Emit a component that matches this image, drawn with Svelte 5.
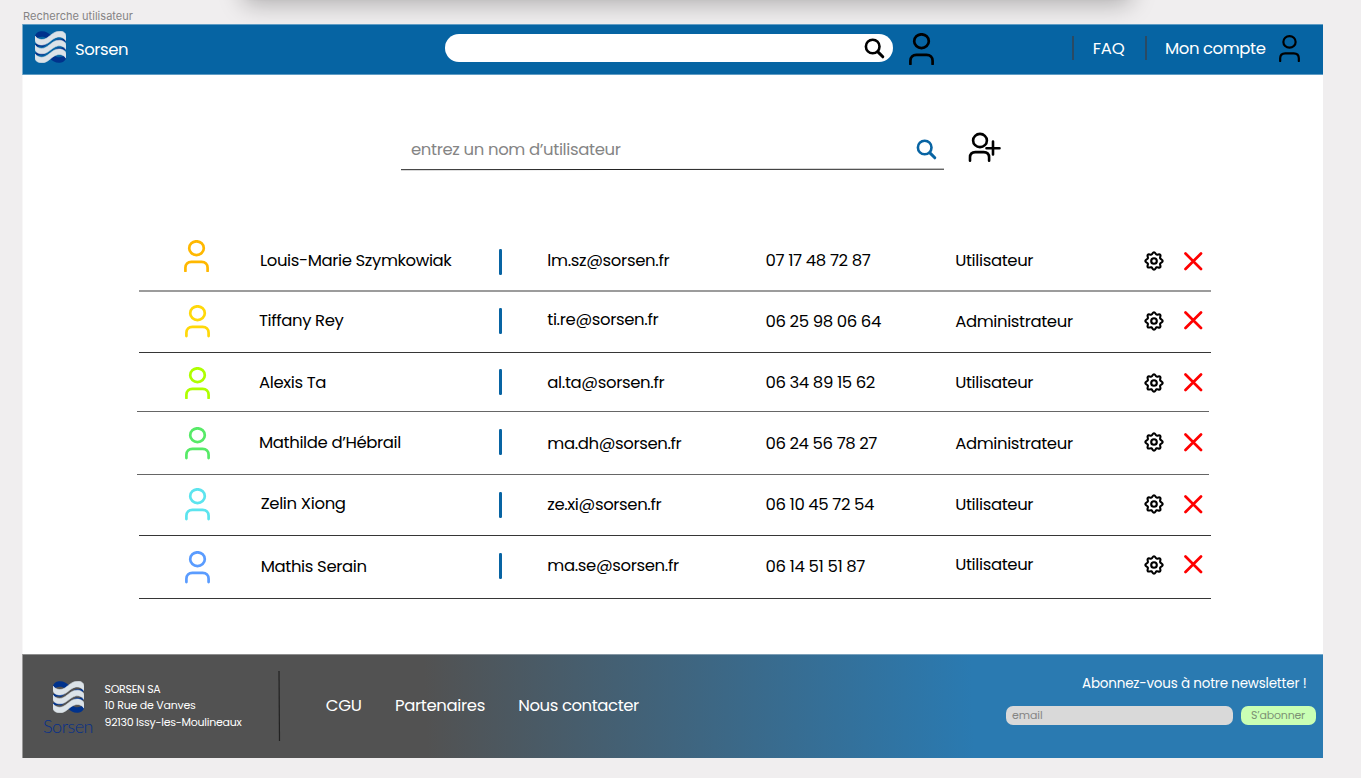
<script>
  const users = [
    { name: 'Louis-Marie Szymkowiak', mail: 'lm.sz@sorsen.fr', tel: '07 17 48 72 87', role: 'Utilisateur', color: '#ffb800', h: 62, w: [191.5, 122, 105, 78], y: [19, 19, 19, 19], dx: [0, 1], icon: 9.5, bar: 18.5, gear: 20.5, del: 21.5, line: '#9c9c9c', thick: 2, shift: 0 },
    { name: 'Tiffany Rey', mail: 'ti.re@sorsen.fr', tel: '06 25 98 06 64', role: 'Administrateur', color: '#ffd809', h: 61, w: [84.5, 111, 115.5, 117.5], y: [17, 16.4, 18, 18], dx: [0.6, 0], icon: 13, bar: 15.5, gear: 19, del: 18.5, line: '#363636', thick: 1, shift: 0 },
    { name: 'Alexis Ta', mail: 'al.ta@sorsen.fr', tel: '06 34 89 15 62', role: 'Utilisateur', color: '#aeff00', h: 59, w: [67, 117, 109.5, 78], y: [18, 18, 18, 18], dx: [0.6, 0], icon: 13.5, bar: 16, gear: 19.5, del: 20, line: '#666', thick: 1, shift: -2 },
    { name: 'Mathilde d’Hébrail', mail: 'ma.dh@sorsen.fr', tel: '06 24 56 78 27', role: 'Administrateur', color: '#57ea67', h: 63, w: [142, 134, 111.5, 117.5], y: [19, 20, 20, 20], dx: [0.6, 0], icon: 15, bar: 17, gear: 20, del: 20.5, line: '#666', thick: 1, shift: -2 },
    { name: 'Zelin Xiong', mail: 'ze.xi@sorsen.fr', tel: '06 10 45 72 54', role: 'Utilisateur', color: '#5ce4ee', h: 61, w: [85, 114, 108.5, 78], y: [17, 18, 18, 18], dx: [0.6, 1.7], icon: 13, bar: 16.5, gear: 19, del: 19.5, line: '#363636', thick: 1, shift: 0 },
    { name: 'Mathis Serain', mail: 'ma.se@sorsen.fr', tel: '06 14 51 51 87', role: 'Utilisateur', color: '#5a9cff', h: 63, w: [106, 131.5, 99.5, 78], y: [19, 18, 19, 17], dx: [0.6, 1.7], icon: 15, bar: 17, gear: 18.5, del: 19, line: '#363636', thick: 1, shift: 0 }
  ];

  // Spreads the letters of a label so that it fills the given width.
  function fit(node, width) {
    const natural = node.getBoundingClientRect().width;
    node.style.letterSpacing = (width - natural) / node.textContent.length + 'px';
  }
</script>

{#snippet person(color, w, h, sw)}
  <svg width={w} height={h} viewBox="0 0 25 32.5" fill="none" stroke={color} stroke-width={sw} stroke-linecap="round">
    <ellipse cx="12.5" cy="8.2" rx="7.3" ry="6.9" />
    <path d="M1.4 31.1v-3.4c0-3.6 2.4-5.9 6-5.9h10.2c3.600 0 6 2.300 6 5.900v3.400" />
  </svg>
{/snippet}

{#snippet glass(color)}
  <svg width="21" height="21" viewBox="0 0 21 21" fill="none" stroke={color} stroke-linecap="round">
    <circle cx="8.700" cy="8.500" r="6.800" stroke-width="2.600" />
    <path d="M13.900 13.900l4.900 4.900" stroke-width="3" />
  </svg>
{/snippet}

{#snippet logo()}
  <svg width="31" height="32" viewBox="0 0 31 32">
    <g fill="#00328c">
      <path d="M0 5C1 1.500 4 .3 7 .3c4 0 6.500 2 9 4l-4 3C9 5.500 4 4.500 0 9z" />
      <path d="M31 27c-1 3.500-4 4.700-7 4.700-4 0-6.500-2-9-4l4-3c3 1.800 8 2.800 12-1.700z" />
      <path d="M0 14c4-4 8-3.500 12-1l-4 3C5 14.500 2 15 0 18z" />
      <path d="M0 22.500c4-4 8-3.500 12-1l-4 3C5 23 2 24 0 26z" />
      <path d="M31 9.500c-3 3.500-7 4-12 1.500l4-3c3 1 6 .5 8-2z" />
      <path d="M31 18c-3 3.500-7 4-12 1.500l4-3c3 1 6 .5 8-2z" />
    </g>
    <g fill="#dce3e8" stroke="#dce3e8" stroke-width=".6">
      <path d="M0 5c2.500 3.500 7 4.500 11 2.500C15.500 5 18.500.2 25 .2c3.500 0 6 2 6 5v4.600c-3-4.300-7.500-5-12-2.300-4 2.500-7 6.500-12 6.500-4 0-7-2-7-5z" />
      <path d="M0 14c2.500 3.500 7 4.500 11 2.200 4.500-2.500 7.500-7 13-7 3.500 0 7 1.800 7 5v4.300c-3-4.300-7.500-4.700-12-2-4 2.500-7 6.300-12 6.300-4 0-7-2-7-4.800z" />
      <path d="M0 22.800c2.500 3.500 7 4.500 11 2.200 4.500-2.500 7.500-7 13-7 3.500 0 7 1.800 7 5v4.200c-3-4.300-7.500-4.700-12-2-4 2.500-7 6.600-12 6.600-4 0-7-2-7-4.800z" />
    </g>
  </svg>
{/snippet}

<div class="canvas">
  <div class="toolbar"></div>
  <div class="caption"><span use:fit={110}>Recherche utilisateur</span></div>

  <div class="frame">
    <header>
      <div class="brand">{@render logo()}<span use:fit={53}>Sorsen</span></div>
      <div class="pill">{@render glass('#000')}</div>
      <div class="head-user">{@render person('#000', 25, 32.5, 2.700)}</div>
      <nav>
        <i></i>
        <span class="faq" use:fit={32}>FAQ</span>
        <i></i>
        <span class="account" use:fit={100.5}>Mon compte</span>
        {@render person('#000', 21, 27.3, 2.600)}
      </nav>
    </header>

    <main>
      <div class="search">
        <div class="field">
          <div class="entry">
            <span use:fit={209.5}>entrez un nom d’utilisateur</span>
            {@render glass('#0864a3')}
          </div>
          <svg class="rule" width="543" height="3" viewBox="0 0 543 3"><path d="M0 1.700L543 1.200" stroke="#222" stroke-width="1" /></svg>
        </div>
        <svg width="33" height="31" viewBox="0 0 33 31" fill="none" stroke="#000" stroke-width="2.600" stroke-linecap="round">
          <ellipse cx="12" cy="8.500" rx="6.900" ry="6.600" />
          <path d="M2 28.800v-3.300c0-3.400 2.200-5.400 5.400-5.400h8.300c3.200 0 5.400 2 5.400 5.400v3.300" />
          <path d="M25 9.500v13M18.500 16.300h13" stroke-width="2.600" />
        </svg>
      </div>

      <div class="list">
        {#each users as u}
          <div class="row" style:height="{u.h}px">
            <div class="cells">
              <div style:padding-top="{u.icon}px" style:padding-left="{u.dx[0]}px">{@render person(u.color, 25, 32.5, 2.700)}</div>
              <div style:padding-top="{u.y[0]}px" style:padding-left="{u.dx[1] + 0.7}px"><span use:fit={u.w[0]}>{u.name}</span></div>
              <div style:padding-top="{u.bar}px">
                <svg width="3" height="26"><rect width="3" height="26" rx="1.200" fill="#0864a3" /></svg>
              </div>
              <div style:padding-top="{u.y[1]}px"><span use:fit={u.w[1]}>{u.mail}</span></div>
              <div style:padding-top="{u.y[2]}px"><span use:fit={u.w[2]}>{u.tel}</span></div>
              <div style:padding-top="{u.y[3]}px"><span use:fit={u.w[3]}>{u.role}</span></div>
              <div style:padding-top="{u.gear}px">
                <svg width="20" height="20" viewBox="0 0 20 20" fill="none" stroke="#000" stroke-width="2.100" stroke-linejoin="round">
                  <path d="M10 1.300c1.400 0 1.500 1.900 2.600 2.350s2.600-.9 3.600.1-.5 2.400-.05 3.500 2.550 1.350 2.550 2.750-2.100 1.600-2.550 2.700 1 2.600 0 3.600-2.450-.5-3.550-.05-1.200 2.450-2.600 2.450-1.500-2-2.600-2.450-2.600 1-3.600 0 .5-2.500.05-3.600S1.300 11.400 1.300 10s2.100-1.600 2.550-2.700-1-2.600 0-3.600 2.450.4 3.550-.05S8.600 1.300 10 1.300z" />
                  <circle cx="10" cy="10" r="2.800" />
                </svg>
              </div>
              <div style:padding-top="{u.del}px">
                <svg width="19" height="19" viewBox="0 0 19 19" stroke="#f00" stroke-width="2.700" stroke-linecap="round"><path d="M1.500 1.500l15.500 15.500M17 1.500L1.500 17" /></svg>
              </div>
            </div>
            <div class="line" style:height="{u.thick}px" style:background={u.line} style:margin-left="{u.shift}px"></div>
          </div>
        {/each}
      </div>
    </main>

    <footer>
      <div class="foot-logo">{@render logo()}<span use:fit={50}>Sorsen</span></div>
      <div class="address">
        <div><span use:fit={56}>SORSEN SA</span></div>
        <div><span use:fit={91}>10 Rue de Vanves</span></div>
        <div><span use:fit={137}>92130 Issy-les-Moulineaux</span></div>
      </div>
      <svg class="split" width="3" height="70"><path d="M1 0L1.500 70" stroke="#222" stroke-width="1.200" /></svg>
      <div class="links">
        <span use:fit={36}>CGU</span>
        <span use:fit={90}>Partenaires</span>
        <span use:fit={120.5}>Nous contacter</span>
      </div>
      <div class="news">
        <div class="title"><span use:fit={224.5}>Abonnez-vous à notre newsletter !</span></div>
        <div class="form">
          <div class="email"><span use:fit={30.5}>email</span></div>
          <div class="go"><span use:fit={54}>S’abonner</span></div>
        </div>
      </div>
    </footer>
  </div>
</div>

<style>
  :global(body) { background: #f0eeef; }
  .canvas {
    position: relative;
    box-sizing: border-box;
    width: 1361px;
    height: 778px;
    padding-left: 23px;
    overflow: hidden;
    font: 16.500px/24px Poppins, Inter, sans-serif;
    color: #000;
    white-space: nowrap;
  }
  svg { display: block; flex: none; }
  span { display: inline-block; }
  .toolbar {
    position: absolute;
    left: 243px;
    top: -41px;
    width: 888px;
    height: 40px;
    border-radius: 6px;
    box-shadow: 0 0 2px rgba(0, 0, 0, .15), 0 5px 24px rgba(0, 0, 0, .28);
  }
  .caption {
    height: 24px;
    box-sizing: border-box;
    padding-top: 8px;
    font: 11px/16px Inter, sans-serif;
    color: #858384;
  }
  .frame { position: relative; width: 1300px; height: 734px; background: #fff; box-shadow: -1px 0 #f8f7f7; }
  header {
    box-sizing: border-box;
    height: 51px;
    border-top: 1px solid #5f9cc4;
    border-bottom: 1px solid #5f9cc4;
    background: #0664a3;
    box-shadow: -1px 0 #7baccb;
    color: #fff;
    display: flex;
    align-items: flex-start;
  }
  .brand { display: flex; width: 410px; padding: 6px 0 0 12px; gap: 9px; box-sizing: content-box; }
  .brand span { margin-top: 7px; }
  .pill {
    box-sizing: border-box;
    width: 448px;
    height: 28px;
    margin: 9.400px 0 0 0;
    border-radius: 14px;
    background: #fff;
    display: flex;
    justify-content: flex-end;
    padding: 4px 8.500px 0 0;
  }
  .head-user { padding: 7.500px 0 0 16.300px; }
  nav { display: flex; padding-left: 137.700px; }
  nav i { width: 2px; height: 24px; margin-top: 11px; background: #2a4a63; }
  .faq { margin: 12px 20.500px 0 18.700px; }
  .account { margin: 12px 14px 0 17.800px; }
  nav :global(svg) { margin-top: 9.500px; }

  main { height: 579px; box-sizing: border-box; padding: 57px 0 0 116px; }
  .search { display: flex; padding-left: 262px; height: 98px; }
  .field { width: 543px; margin-right: 24px; }
  .entry { display: flex; justify-content: space-between; height: 36px; padding: 0 7px 0 10px; color: #858585; }
  .entry span { margin-top: 5.500px; }
  .entry :global(svg) { margin-top: 7px; }

  .row { display: flex; flex-direction: column; justify-content: space-between; }
  .cells {
    display: grid;
    flex: 1;
    min-height: 0;
    padding-left: 45.300px;
    grid-template-columns: 74px 240.700px 48.300px 218.200px 189.700px 188.500px 40px 20px;
  }
  .line { width: 1072px; flex: none; }

  footer {
    height: 104px;
    box-sizing: border-box;
    border-top: 1px solid rgba(255, 255, 255, .35);
    background: linear-gradient(88deg, #525252 31%, #2a7ab1 73%) border-box;
    box-shadow: -1px 0 #9a9999;
    color: #fff;
    display: flex;
    align-items: flex-start;
  }
  .foot-logo {
    width: 50px;
    margin: 26px 0 0 20px;
    font: 300 18px/22px Lato, sans-serif;
    color: #06308a;
  }
  .foot-logo :global(svg) { margin-left: 10px; }
  .foot-logo span { margin-top: 2px; }
  .address { margin: 26px 0 0 11.500px; width: 173.500px; font-size: 11px; line-height: 16.300px; }
  .address span { display: inline-block; line-height: 16px; }
  .address div { height: 16.300px; }
  .split { margin-top: 16px; }
  .links { display: flex; flex: none; gap: 33.300px; padding: 39px 0 0 44.700px; width: 725px; box-sizing: border-box; }
  .news { margin-top: 19px; }
  .title { font-size: 13.500px; line-height: 20px; padding-left: 76px; height: 32px; }
  .form { display: flex; gap: 8px; font-size: 11px; line-height: 18px; color: #858585; }
  .email { box-sizing: border-box; width: 226.500px; height: 19px; padding-left: 6px; border-radius: 7px; background: #d9d9d9; }
  .go { box-sizing: border-box; width: 75px; height: 19px; padding-left: 10.500px; border-radius: 7px; background: #c9ffb4; color: #7d9275; }
</style>
